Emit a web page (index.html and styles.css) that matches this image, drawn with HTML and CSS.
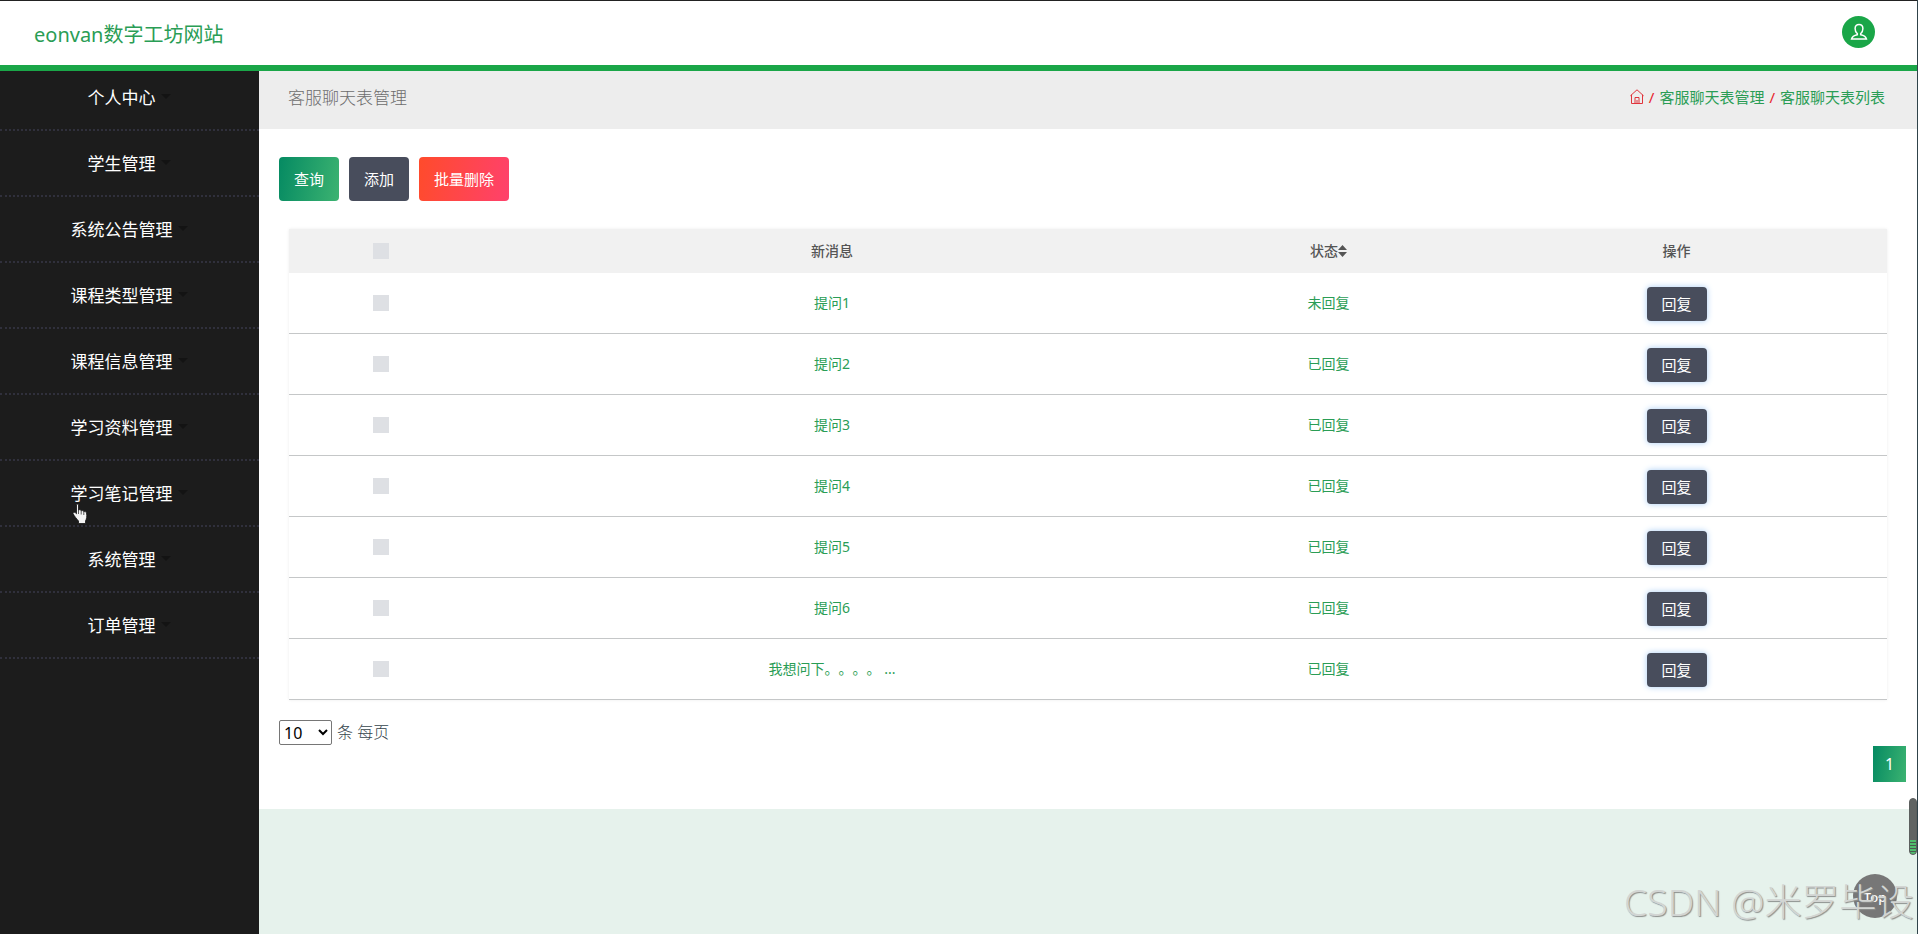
FILE: index.html
```html
<!DOCTYPE html>
<html lang="zh-CN">
<head>
    <meta charset="UTF-8">
    <meta name="viewport" content="width=device-width, initial-scale=1.0">
    <title>客服聊天表管理</title>
    <link rel="stylesheet" href="styles.css">
</head>
<body>

    <header class="topbar">
        <div class="brand">eonvan数字工坊网站</div>
        <a class="avatar" href="#">
            <svg width="18" height="18" viewBox="0 0 18 18" fill="none" stroke="#fff" stroke-width="1.5">
                <path d="M7.3 10.6C5.9 9.7 5.1 7.8 5.1 5.6C5.1 3 6.6 1.4 9 1.4s3.9 1.6 3.9 4.2c0 2.2-.8 4.1-2.2 5v1.1c3 .5 5.2 1.8 5.8 4.4H1.5c.6-2.6 2.800-3.900 5.800-4.400z"/>
            </svg>
        </a>
    </header>

    <div class="wrapper">
        <ul class="sidebar">
            <li><a href="#">个人中心</a></li>
            <li><a href="#">学生管理</a></li>
            <li><a href="#">系统公告管理</a></li>
            <li><a href="#">课程类型管理</a></li>
            <li><a href="#">课程信息管理</a></li>
            <li><a href="#">学习资料管理</a></li>
            <li><a href="#">学习笔记管理</a></li>
            <li><a href="#">系统管理</a></li>
            <li><a href="#">订单管理</a></li>
        </ul>

        <div class="content">
            <div class="page-head">
                <h3>客服聊天表管理</h3>
                <div class="breadcrumb">
                    <svg class="home" width="14" height="15" viewBox="0 0 14 15" fill="none" stroke="#e0343c">
                        <path d="M.4 6.8L7 .8l6.600 6M1.500 5.800v8.700h11V5.800M5 14.500V8.500h4v6M7 11v3"/>
                    </svg>
                    <i>/</i><a href="#">客服聊天表管理</a><i>/</i><a href="#">客服聊天表列表</a>
                </div>
            </div>

            <div class="panel">
                <div class="actions">
                    <button class="btn btn-search">查询</button>
                    <button class="btn">添加</button>
                    <button class="btn btn-delete">批量删除</button>
                </div>

                <table class="list">
                    <thead>
                        <tr>
                            <th class="col-check"><span class="check"></span></th>
                            <th class="col-msg">新消息</th>
                            <th class="col-status">状态<svg class="sort" width="9" height="12" viewBox="0 0 9 12" fill="#555"><path d="M0 5l4.500-5L9 5zM0 7h9l-4.500 5z"/></svg></th>
                            <th>操作</th>
                        </tr>
                    </thead>
                    <tbody>
                        <tr><td><span class="check"></span></td><td>提问1</td><td>未回复</td><td><button class="btn btn-reply">回复</button></td></tr>
                        <tr><td><span class="check"></span></td><td>提问2</td><td>已回复</td><td><button class="btn btn-reply">回复</button></td></tr>
                        <tr><td><span class="check"></span></td><td>提问3</td><td>已回复</td><td><button class="btn btn-reply">回复</button></td></tr>
                        <tr><td><span class="check"></span></td><td>提问4</td><td>已回复</td><td><button class="btn btn-reply">回复</button></td></tr>
                        <tr><td><span class="check"></span></td><td>提问5</td><td>已回复</td><td><button class="btn btn-reply">回复</button></td></tr>
                        <tr><td><span class="check"></span></td><td>提问6</td><td>已回复</td><td><button class="btn btn-reply">回复</button></td></tr>
                        <tr><td><span class="check"></span></td><td>我想问下。。。。 ...</td><td>已回复</td><td><button class="btn btn-reply">回复</button></td></tr>
                    </tbody>
                </table>

                <div class="page-size">
                    <select><option>10</option><option>25</option><option>50</option></select>
                    <span>条 每页</span>
                </div>
                <div class="pagination"><a href="#">1</a></div>
            </div>
        </div>
    </div>

    <a class="to-top" href="#">Top</a>
    <div class="meter"></div>
    <div class="watermark">CSDN @米罗毕设</div>
    <div class="window-edge"></div>
    <svg class="cursor" width="17" height="22" viewBox="0 0 17 22">
        <path d="M4.500 2C4.500.8 6.500.8 6.500 2v5c1.300-.6 2.500-.2 2.700.8 1.200-.5 2.400-.1 2.600.9 1.300-.4 2.500.1 2.700 1.300.6 3.400.2 5.600-1 8v2.500H6.500V18C4.500 15.500 2.500 13.500 1 10.500c.2-1.600 2-1.600 3.500.3z" fill="#f4f4f4" stroke="#111" stroke-width=".8"/>
        <path d="M6.500 7v4M9.200 8v3.500M11.800 9v3" stroke="#333" stroke-width=".8"/>
    </svg>

</body>
</html>
```
FILE: styles.css
```css
* { box-sizing: border-box; }
body { margin: 0; height: 934px; overflow: hidden; display: flex; flex-direction: column; background: #e6f2ec; font-family: "Noto Sans", "Noto Sans CJK SC", sans-serif; text-spacing-trim: space-all; }
a { text-decoration: none; color: inherit; }
button, select { font-family: inherit; }

.topbar { height: 71px; display: flex; justify-content: space-between; align-items: center; padding: 0 43px 2px 34px; background: #fff; border-top: 1px solid #222; border-bottom: 6px solid #1aa648; }
.brand { padding-top: 2px; font-size: 20px; color: #2a9d55; }
.avatar { display: flex; justify-content: center; align-items: center; width: 33px; height: 32px; border-radius: 50%; background: #1aa648; }

.wrapper { flex: 1; display: flex; }
.sidebar { width: 259px; margin: 0; padding: 0; list-style: none; background: #1c1c1c; }
.sidebar li { height: 66px; border-bottom: 2px dotted #30303c; }
.sidebar li:first-child { height: 60px; padding-bottom: 6px; }
.sidebar a { height: 100%; display: flex; justify-content: center; align-items: center; gap: 5px; padding: 0 1px 2px 0; font-size: 17px; color: #fff; }
.sidebar a::after { content: ""; border: 5px solid transparent; border-top-color: #131313; border-bottom: 0; }

.content { flex: 1; }
.page-head { height: 58px; display: flex; justify-content: space-between; align-items: center; padding: 0 33px 7px 29px; background: #ededed; }
.page-head h3 { margin: 0; font-size: 17px; font-weight: 300; color: #6c6c6c; }
.breadcrumb { display: flex; align-items: center; font-size: 15px; color: #2a9d55; }
.breadcrumb i { margin: 0 5px; font-style: normal; color: #e81e2c; }

.panel { height: 680px; padding: 28px 12px 0 20px; background: #fff; }
.actions { display: flex; gap: 10px; margin-bottom: 28px; }
.btn { height: 44px; padding: 0 15px; border: none; border-radius: 4px; background: #484d5c; color: #fff; font-size: 15px; line-height: 20px; }
.btn-search { background: linear-gradient(100deg, #058a62, #3cb371); }
.btn-delete { background: linear-gradient(100deg, #ff4b2b, #ff416c); }
.btn-reply { display: block; width: 60px; height: 34px; margin: 2px auto 0; box-shadow: 0 0 6px #a9cdf5; }

.list { width: 1598px; margin-left: 10px; table-layout: fixed; border-collapse: separate; border-spacing: 0; text-align: center; font-size: 14px; box-shadow: 0 0 3px rgba(0, 0, 0, .08); }
.list th { height: 44px; padding: 0; background: #f1f1f1; font-weight: 500; color: #555; line-height: 18px; }
.list td { height: 61px; padding: 0; border-bottom: 1px solid #c5c7c8; color: #2a9d55; line-height: 18px; }
.col-check { width: 184px; }
.col-msg { width: 718px; }
.col-status { width: 275px; }
.check { display: block; width: 16px; height: 16px; margin: 0 auto; background: #dee0e4; }
.sort { vertical-align: -1px; }

.page-size { display: flex; align-items: center; gap: 5px; margin-top: 20px; font-size: 16px; font-weight: 300; color: #35444c; }
.page-size span { line-height: 25px; }
.page-size select { width: 53px; height: 25px; padding: 0; border: 1px solid #767676; border-radius: 2px; background-color: #fff; font-size: 16px; color: #000; }
.pagination { display: flex; justify-content: flex-end; margin-top: 1px; }
.pagination a { width: 33px; height: 36px; line-height: 36px; text-align: center; background: linear-gradient(100deg, #058a62, #3cb371); color: #fff; font-size: 16px; }

/* floating layer */
.to-top { position: absolute; right: 21px; bottom: 16px; width: 44px; height: 44px; border-radius: 50%; background: #777; color: #fff; font-size: 13px; font-weight: 500; line-height: 46px; text-align: center; }
.meter { position: absolute; right: 1px; top: 798px; width: 8px; height: 57px; border: 1px solid #5c5f5e; border-radius: 4px; background: repeating-linear-gradient(#4fbd6c 0 2px, #4a5a50 2px 3px) bottom / 100% 14px no-repeat #606463; }
.watermark { position: absolute; right: 4px; bottom: 7px; font-size: 37.4px; font-weight: 300; line-height: 50px; color: #d2d5d3; text-shadow: 1px 1px 1px #8c8f8d; white-space: nowrap; }
.window-edge { position: absolute; right: 0; top: 0; width: 1px; height: 934px; background: #30434a; }
.cursor { position: absolute; left: 72px; top: 503px; }
```
